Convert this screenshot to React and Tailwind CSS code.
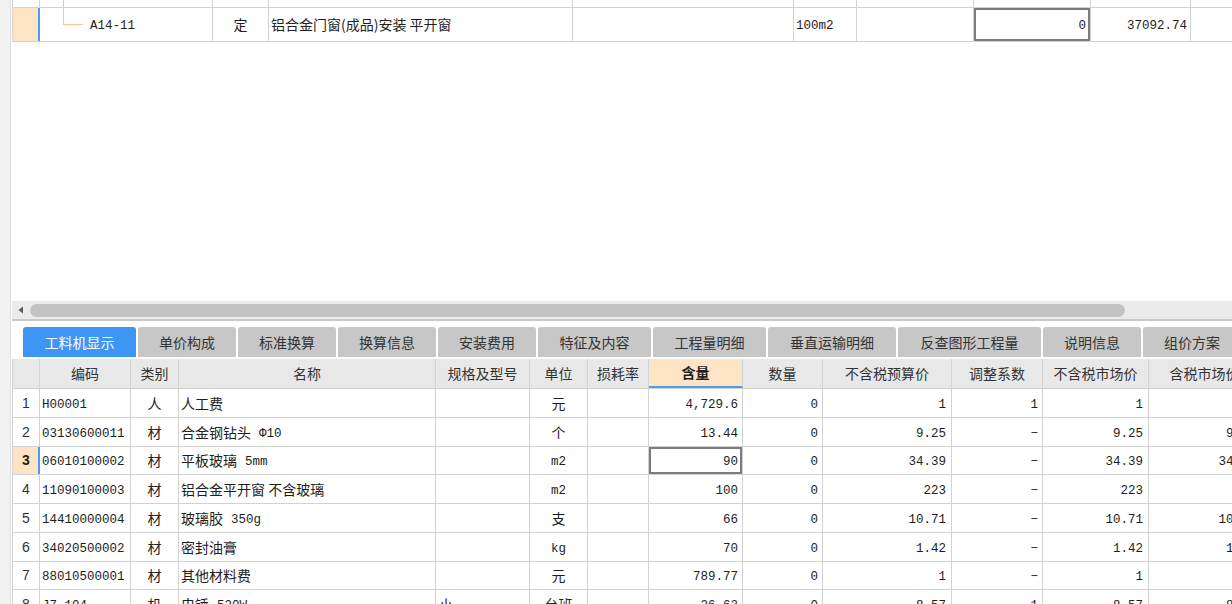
import React from "react";

const cjk = "font-['Noto_Sans_CJK_SC',sans-serif]";
const mono = "font-['Liberation_Mono','Noto_Sans_CJK_SC',monospace] text-[12.5px] translate-y-[2px]";

const tabs = [
  { label: "工料机显示", w: "w-[113px]", active: true },
  { label: "单价构成", w: "w-[98px]" },
  { label: "标准换算", w: "w-[98px]" },
  { label: "换算信息", w: "w-[98px]" },
  { label: "安装费用", w: "w-[98px]" },
  { label: "特征及内容", w: "w-[113px]" },
  { label: "工程量明细", w: "w-[113px]" },
  { label: "垂直运输明细", w: "w-[128px]" },
  { label: "反查图形工程量", w: "w-[143px]" },
  { label: "说明信息", w: "w-[98px]" },
  { label: "组价方案", w: "w-[98px]" },
];

const rows = [
  { n: 1, h: "h-[29px]", code: "H00001", type: "人", name: "人工费", unit: "元", content: "4,729.6", budget: "1", coef: "1", market: "1" },
  { n: 2, h: "h-[29px]", code: "03130600011", type: "材", name: "合金钢钻头", extra: "Φ10", unit: "个", content: "13.44", budget: "9.25", coef: "−", market: "9.25" },
  { n: 3, h: "h-[28px]", code: "06010100002", type: "材", name: "平板玻璃", extra: "5mm", unit: "m2", unitMono: true, content: "90", budget: "34.39", coef: "−", market: "34.39", selected: true },
  { n: 4, h: "h-[29px]", code: "11090100003", type: "材", name: "铝合金平开窗 不含玻璃", unit: "m2", unitMono: true, content: "100", budget: "223", coef: "−", market: "223" },
  { n: 5, h: "h-[29px]", code: "14410000004", type: "材", name: "玻璃胶", extra: "350g", unit: "支", content: "66", budget: "10.71", coef: "−", market: "10.71" },
  { n: 6, h: "h-[29px]", code: "34020500002", type: "材", name: "密封油膏", unit: "kg", unitMono: true, content: "70", budget: "1.42", coef: "−", market: "1.42" },
  { n: 7, h: "h-[28px]", code: "88010500001", type: "材", name: "其他材料费", unit: "元", content: "789.77", budget: "1", coef: "−", market: "1" },
  { n: 8, h: "h-[29px]", code: "J7-104", type: "机", name: "电锤", extra: "520W", spec: "小", unit: "台班", content: "26.63", budget: "8.57", coef: "1", market: "8.57" },
];

const line = "border-[#d2d2d2]";

// numbers / codes sit in their own span so they can be nudged down to the CJK baseline
const M = ({ children, className = "" }) => <span className={`${mono} ${className}`}>{children}</span>;

function TopTable() {
  return (
    <div className={`ml-px border-l ${line} w-max`}>
      {/* partial row above */}
      <div className={`flex h-[8px] border-b ${line}`}>
        <div className={`w-[27px] border-r ${line}`} />
        <div className={`w-[173px] border-r ${line}`}>
          <div className="ml-[23px] h-full border-l border-[#f6c88c]" />
        </div>
        <div className={`w-[56px] border-r ${line}`} />
        <div className={`w-[304px] border-r ${line}`} />
        <div className={`w-[221px] border-r ${line}`} />
        <div className={`w-[63px] border-r ${line}`} />
        <div className={`w-[117px] border-r ${line}`} />
        <div className={`w-[117px] border-r ${line}`} />
        <div className={`w-[100px] border-r ${line}`} />
        <div className="w-[60px]" />
      </div>
      <div className={`flex h-[34px] border-b ${line} text-[#1e1e1e]`}>
        <div className="w-[27px] bg-[#fde4c5] border-r-2 border-[#4a9cf4]" />
        <div className={`w-[173px] border-r ${line} flex items-start`}>
          <div className="ml-[23px] w-[20px] h-[17px] border-l border-b border-[#f6c88c]" />
          <M className="ml-[7px] self-center">A14-11</M>
        </div>
        <div className={`w-[56px] border-r ${line} flex items-center justify-center ${cjk} text-[14px]`}>定</div>
        <div className={`w-[304px] border-r ${line} flex items-center pl-[2px] ${cjk} text-[14px]`}>
          铝合金门窗(成品)安装 平开窗
        </div>
        <div className={`w-[221px] border-r ${line}`} />
        <div className={`w-[63px] border-r ${line} flex items-center pl-[2px]`}>
          <M>100m2</M>
        </div>
        <div className={`w-[117px] border-r ${line}`} />
        <div className={`w-[117px] border-r ${line} flex items-center justify-end pr-[4px] shadow-[inset_0_0_0_2px_#7c7c7c]`}>
          <M>0</M>
        </div>
        <div className={`w-[100px] border-r ${line} flex items-center justify-end pr-[3px]`}>
          <M>37092.74</M>
        </div>
        <div className="w-[60px]" />
      </div>
    </div>
  );
}

function Scrollbar() {
  return (
    <div className="ml-px h-[20px] shrink-0 bg-[#ebebeb] border-b-2 border-[#c9c9c9] flex items-center">
      <svg width="18" height="18" viewBox="0 0 18 18" className="shrink-0">
        <path d="M11 5.5 L6.5 9 L11 12.5 Z" fill="#5a5a5a" />
      </svg>
      <div className="w-[1095px] h-[13px] rounded-full bg-[#c3c3c3]" />
    </div>
  );
}

function Tabs() {
  return (
    <div className="flex gap-[2px] pl-[12px] h-[30px] shrink-0">
      {tabs.map((t) => (
        <div
          key={t.label}
          className={`${t.w} shrink-0 rounded-t-[3px] flex items-center justify-center ${cjk} text-[14px] ${
            t.active ? "bg-[#3d95f4] text-white" : "bg-[#c7c7c7] text-[#333333]"
          }`}
        >
          {t.label}
        </div>
      ))}
    </div>
  );
}

function HeadCell({ w, children, hl }) {
  return (
    <div
      className={`${w} shrink-0 flex items-center justify-center ${cjk} text-[14px] ${
        hl
          ? "bg-[#fde4c5] border-r border-b-2 border-r-[#d2d2d2] border-b-[#4a9cf4] font-bold text-[#1e1e1e]"
          : "border-r border-[#d2d2d2] text-[#333333]"
      }`}
    >
      {children}
    </div>
  );
}

function Grid() {
  return (
    <div className={`ml-px border-l ${line} w-max shrink-0`}>
      <div className={`flex h-[30px] bg-[#e8e8e8] border-b ${line}`}>
        <HeadCell w="w-[27px]" />
        <HeadCell w="w-[91px]">编码</HeadCell>
        <HeadCell w="w-[48px]">类别</HeadCell>
        <HeadCell w="w-[257px]">名称</HeadCell>
        <HeadCell w="w-[94px]">规格及型号</HeadCell>
        <HeadCell w="w-[58px]">单位</HeadCell>
        <HeadCell w="w-[61px]">损耗率</HeadCell>
        <HeadCell w="w-[94px]" hl>含量</HeadCell>
        <HeadCell w="w-[80px]">数量</HeadCell>
        <HeadCell w="w-[129px]">不含税预算价</HeadCell>
        <HeadCell w="w-[91px]">调整系数</HeadCell>
        <HeadCell w="w-[106px]">不含税市场价</HeadCell>
        <HeadCell w="w-[112px]">含税市场价</HeadCell>
      </div>
      {rows.map((r) => (
        <div key={r.n} className={`flex ${r.h} border-b ${line} text-[#1e1e1e]`}>
          <div
            className={`w-[27px] shrink-0 flex items-center justify-center font-['Liberation_Sans',sans-serif] text-[14px] ${
              r.selected
                ? "bg-[#fde4c5] border-r-2 border-[#4a9cf4] font-bold pl-[1px]"
                : "border-r border-[#d2d2d2] text-[#333333]"
            }`}
          >
            {r.n}
          </div>
          <div className={`w-[91px] shrink-0 border-r ${line} flex items-center pl-[2px]`}>
            <M>{r.code}</M>
          </div>
          <div className={`w-[48px] shrink-0 border-r ${line} flex items-center justify-center ${cjk} text-[14px]`}>{r.type}</div>
          <div className={`w-[257px] shrink-0 border-r ${line} flex items-center pl-[2px] ${cjk} text-[14px] whitespace-pre`}>
            <span>{r.name}</span>
            {r.extra && <M className="ml-[8px]">{r.extra}</M>}
          </div>
          <div className={`w-[94px] shrink-0 border-r ${line} flex items-center pl-[3px] ${cjk} text-[14px]`}>{r.spec}</div>
          <div className={`w-[58px] shrink-0 border-r ${line} flex items-center justify-center ${cjk} text-[14px]`}>
            {r.unitMono ? <M>{r.unit}</M> : r.unit}
          </div>
          <div className={`w-[61px] shrink-0 border-r ${line}`} />
          <div
            className={`w-[94px] shrink-0 border-r ${line} flex items-center justify-end pr-[4px] ${
              r.selected ? "shadow-[inset_0_0_0_2px_#7c7c7c]" : ""
            }`}
          >
            <M>{r.content}</M>
          </div>
          <div className={`w-[80px] shrink-0 border-r ${line} flex items-center justify-end pr-[4px]`}>
            <M>0</M>
          </div>
          <div className={`w-[129px] shrink-0 border-r ${line} flex items-center justify-end pr-[5px]`}>
            <M>{r.budget}</M>
          </div>
          <div className={`w-[91px] shrink-0 border-r ${line} flex items-center justify-end pr-[4px]`}>
            <M>{r.coef}</M>
          </div>
          <div className={`w-[106px] shrink-0 border-r ${line} flex items-center justify-end pr-[5px]`}>
            <M>{r.market}</M>
          </div>
          <div className={`w-[112px] shrink-0 border-r ${line} flex items-center justify-end pr-[4px]`}>
            <M>{r.market}</M>
          </div>
        </div>
      ))}
    </div>
  );
}

export default function App() {
  return (
    <div className="w-[1232px] h-[604px] overflow-hidden flex bg-white">
      {/* left gutter */}
      <div className="w-[11px] shrink-0 bg-[#f2f2f2] border-r border-[#e0e0e0]" />

      <div className="flex-1 min-w-0 flex flex-col overflow-hidden">
        {/* top panel */}
        <div className="h-[301px] shrink-0 overflow-hidden">
          <TopTable />
        </div>

        <Scrollbar />

        <div className="h-[6px] shrink-0" />

        <Tabs />

        <div className="h-[2px] shrink-0" />

        <Grid />
      </div>
    </div>
  );
}
